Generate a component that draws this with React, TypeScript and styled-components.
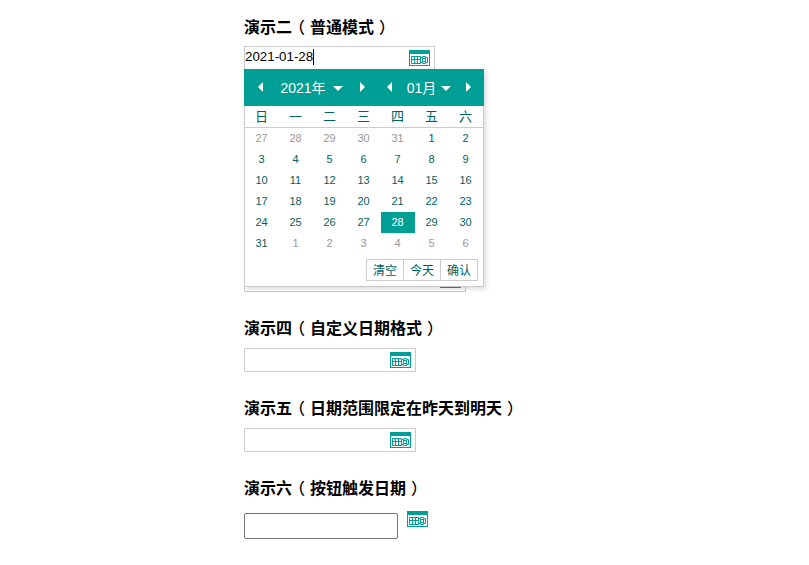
import React from "react";
import styled, { createGlobalStyle } from "styled-components";

const Global = createGlobalStyle`
  html, body { margin: 0; padding: 0; background: #fff; }
  body { font-family: "Liberation Sans", "Noto Sans CJK SC", sans-serif; color: #000; }
`;
const Page = styled.div`
  width: 809px;
  height: 565px;
  overflow: hidden;
  box-sizing: border-box;
  padding: 15px 0 0 244px;
`;
const Section = styled.section<{ $top?: number }>`
  margin-top: ${(p) => p.$top ?? 0}px;
`;
const Title = styled.h3<{ $gap: number }>`
  margin: 0 0 ${(p) => p.$gap}px;
  height: 22px;
  font-size: 16px;
  line-height: 22px;
  font-weight: 700;
  font-family: "Noto Sans CJK SC", sans-serif;
  white-space: nowrap;
`;
const Paren = styled.span`
  display: inline-block;
  width: 18px;
  text-align: center;
  font-weight: 500;
  font-feature-settings: "halt";
`;
const Field = styled.div<{ $width: number }>`
  position: relative;
  box-sizing: border-box;
  display: flex;
  align-items: center;
  justify-content: space-between;
  width: ${(p) => p.$width}px;
  height: 24px;
  border: 1px solid #ccc;
  padding-right: 4px;
  background: #fff;
`;
const Value = styled.span`
  font-size: 13.333px;
  line-height: 22px;
  margin-top: -2px;
  display: flex;
  align-items: center;
`;
const Caret = styled.i`
  display: inline-block;
  width: 1px;
  height: 16px;
  background: #000;
`;
const Popup = styled.div`
  position: absolute;
  left: -1px;
  top: 22px;
  z-index: 2;
  box-sizing: border-box;
  width: 240px;
  height: 218px;
  border: 1px solid #ccc;
  border-top: 0;
  background: #fff;
  box-shadow: 2px 2px 5px rgba(0, 0, 0, 0.15);
  color: #00625c;
  font-size: 12px;
`;
const Header = styled.div`
  display: flex;
  gap: 8px;
  align-items: center;
  box-sizing: border-box;
  height: 37px;
  margin: 0 -1px;
  padding: 0 6px 1px 7px;
  background: #009f95;
  color: #fff;
  font-size: 14px;
`;
const Picker = styled.div<{ $width: number }>`
  width: ${(p) => p.$width}px;
  display: flex;
  align-items: center;
  justify-content: space-between;
`;
const Arrow = styled.span<{ $dir: "left" | "right" }>`
  box-sizing: content-box;
  width: 0;
  height: 0;
  margin: 0 7px;
  border-top: 5px solid transparent;
  border-bottom: 5px solid transparent;
  ${(p) => (p.$dir === "left" ? "border-right: 5px solid #fff;" : "border-left: 5px solid #fff;")}
`;
const Label = styled.span<{ $gap: number }>`
  display: flex;
  align-items: center;
  gap: ${(p) => p.$gap}px;
  white-space: nowrap;
`;
const Down = styled.span`
  width: 0;
  height: 0;
  margin-top: 2px;
  border-left: 5.5px solid transparent;
  border-right: 5.5px solid transparent;
  border-top: 5px solid #fff;
`;
const Week = styled.div`
  display: grid;
  grid-template-columns: repeat(7, 34px);
  height: 21px;
  border-bottom: 1px solid #ccc;
  line-height: 19px;
  text-align: center;
  font-size: 13px;
  font-family: "Noto Sans CJK SC", sans-serif;
`;
const WeekDay = styled.div`
  padding-right: 1px;
`;
const Days = styled.div`
  display: grid;
  grid-template-columns: repeat(7, 34px);
  grid-auto-rows: 21px;
`;
const Day = styled.div<{ $muted?: boolean; $active?: boolean }>`
  padding-right: 1px;
  line-height: 21px;
  text-align: center;
  font-size: 11px;
  color: ${(p) => (p.$active ? "#fff" : p.$muted ? "#999" : "#00625c")};
  background: ${(p) => (p.$active ? "#009f95" : "transparent")};
`;
const Footer = styled.div`
  display: flex;
  justify-content: flex-end;
  padding: 5px 5px 0 0;
`;
const FootButton = styled.button`
  box-sizing: border-box;
  width: 38px;
  height: 22px;
  margin-left: -1px;
  padding: 0 0 2px;
  border: 1px solid #ccc;
  background: #fff;
  color: #00625c;
  font-size: 12px;
  font-family: "Noto Sans CJK SC", sans-serif;
`;
const PlainInput = styled.input`
  box-sizing: border-box;
  width: 154px;
  height: 26px;
  margin-top: 2px;
  border: 1px solid #767676;
  border-radius: 2px;
  padding: 1px 2px;
  background: #fff;
`;
const TriggerRow = styled.div`
  display: flex;
  align-items: flex-start;
  gap: 9px;
`;
const IconSvg = styled.svg`
  display: block;
  flex: none;
`;

const CalendarIcon = () => (
  <IconSvg width="21" height="16" viewBox="0 0 21 16">
    <rect width="21" height="16" fill="#009f95" />
    <rect x="1" y="4" width="19" height="11" fill="#fff" />
    <path d="M2.5 6.5h9v7h-9zM2.5 9.5h9M5.5 6.5v7M8.5 6.5v7" fill="none" stroke="#009f95" />
    <path d="M13.5 6.5h3v1h2v5h-2v1h-3v-1h-2v-5h2z" fill="none" stroke="#009f95" />
    <rect x="13.5" y="8.5" width="3" height="3" fill="none" stroke="#009f95" />
  </IconSvg>
);

const week = ["日", "一", "二", "三", "四", "五", "六"];
const days = [
  ...[27, 28, 29, 30, 31].map((d) => ({ d, m: true })),
  ...Array.from({ length: 31 }, (_, i) => ({ d: i + 1, m: false })),
  ...[1, 2, 3, 4, 5, 6].map((d) => ({ d, m: true })),
];

const DemoTitle = ({ head, body, gap }: { head: string; body: string; gap: number }) => (
  <Title $gap={gap}>
    {head}
    <Paren>（</Paren>
    {body}
    <Paren>）</Paren>
  </Title>
);

export default function App() {
  return (
    <Page>
      <Global />
      <Section>
        <DemoTitle head="演示二" body="普通模式" gap={9} />
        <Field $width={191}>
          <Value>2021-01-28<Caret /></Value>
          <CalendarIcon />
          <Popup>
            <Header>
              <Picker $width={121}>
                <Arrow $dir="left" />
                <Label $gap={7}>2021年<Down /></Label>
                <Arrow $dir="right" />
              </Picker>
              <Picker $width={98}>
                <Arrow $dir="left" />
                <Label $gap={5}>01月<Down /></Label>
                <Arrow $dir="right" />
              </Picker>
            </Header>
            <Week>{week.map((w) => <WeekDay key={w}>{w}</WeekDay>)}</Week>
            <Days>
              {days.map((x, i) => (
                <Day key={i} $muted={x.m} $active={!x.m && x.d === 28}>{x.d}</Day>
              ))}
            </Days>
            <Footer>
              <FootButton>清空</FootButton>
              <FootButton>今天</FootButton>
              <FootButton>确认</FootButton>
            </Footer>
          </Popup>
        </Field>
      </Section>
      <Section $top={198}>
        <Field $width={222}><span /><CalendarIcon /></Field>
      </Section>
      <Section $top={24}>
        <DemoTitle head="演示四" body="自定义日期格式" gap={10} />
        <Field $width={172}><span /><CalendarIcon /></Field>
      </Section>
      <Section $top={24}>
        <DemoTitle head="演示五" body="日期范围限定在昨天到明天" gap={10} />
        <Field $width={172}><span /><CalendarIcon /></Field>
      </Section>
      <Section $top={24}>
        <DemoTitle head="演示六" body="按钮触发日期" gap={13} />
        <TriggerRow>
          <PlainInput />
          <CalendarIcon />
        </TriggerRow>
      </Section>
    </Page>
  );
}
